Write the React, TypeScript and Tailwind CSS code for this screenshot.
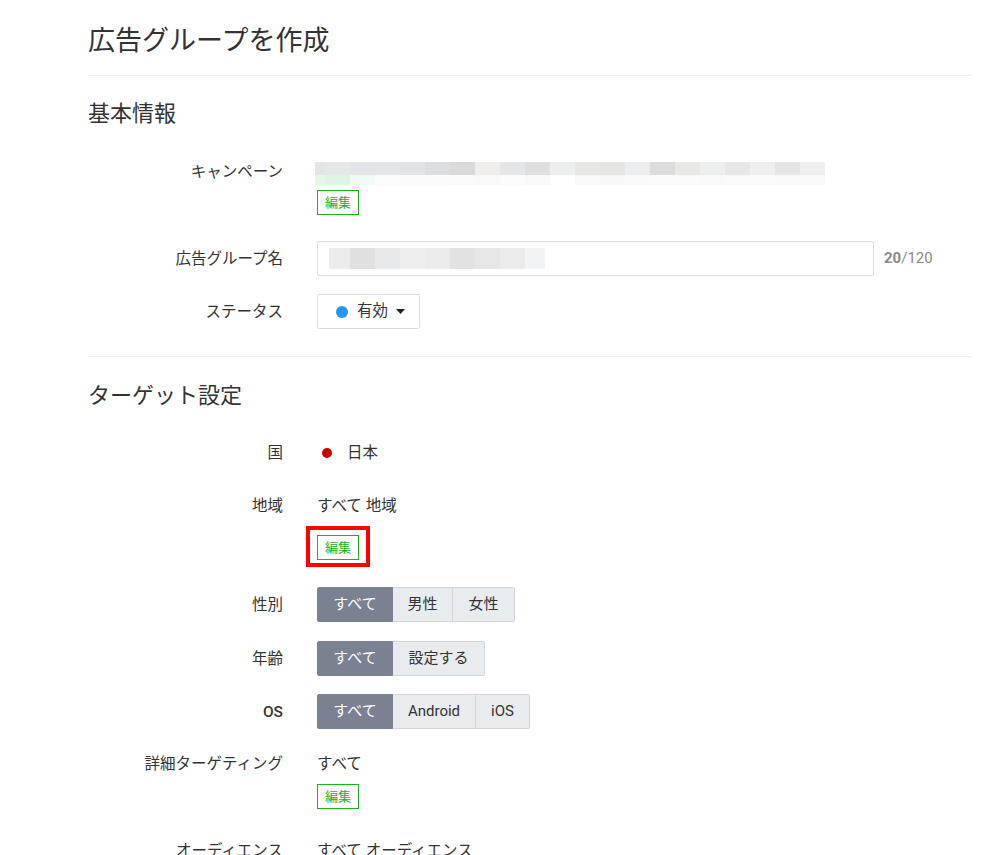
import React from 'react';

const FONT = "font-['Roboto','Noto_Sans_CJK_JP',sans-serif]";

// pixelated (blurred) placeholder blocks
const campaignTop = [
  '#e4e5e7', '#e6e7e9', '#e3e6e9', '#e5e6e8', '#e2e3e5', '#dcdddf', '#dadada', '#efeeec', '#e5e6e8', '#dfdfe0', '#eceeee',
  '#e7e7e5', '#e6e7e5', '#ecedef', '#dcdcdc', '#e8e8e6', '#edefee', '#e7e7e7', '#eeeeef', '#e5e5e5', '#efefef',
];
const campaignBottom = [
  '#e6f6e8', '#e0f3e2', '#f1faf3', '#fcfcfc', '#fbfbfb', '#fbfbfb', '#fafafa', '#f9f9f9', '#fbfdfc', '#f9f9f9', '#ffffff',
  '#f9f9f9', '#f8f8f8', '#f9f9f9', '#f9fbfa', '#fafafa', '#f9f9f9', '#fafafa', '#fafafa', '#f9f9f9', '#f9f9f9',
];
const nameBlocks = [
  { w: 21, c: '#ececec' },
  { w: 25, c: '#e0e0e1' },
  { w: 25, c: '#e8e9ea' },
  { w: 25, c: '#eeeeee' },
  { w: 25, c: '#ebebeb' },
  { w: 25, c: '#e2e2e3' },
  { w: 25, c: '#e6e6e7' },
  { w: 25, c: '#ebebec' },
  { w: 20, c: '#f2f3f4' },
];

const Row: React.FC<{ label: string; className?: string; center?: boolean; children: React.ReactNode }> = ({
  label,
  className = '',
  center,
  children,
}) => (
  <div className={`flex ${center ? 'items-center' : 'items-start'} ${className}`}>
    <div className="w-[195px] shrink-0 text-right text-[15.5px] leading-[22px] text-[#333]">{label}</div>
    <div className="ml-[34px] flex-1">{children}</div>
  </div>
);

const EditButton: React.FC<{ className?: string }> = ({ className = '' }) => (
  <button className={`flex h-[25px] w-[42px] items-center justify-center border border-[#1db21d] bg-white text-[13px] text-[#1db21d] ${className}`}>
    編集
  </button>
);

const Segmented: React.FC<{ items: { label: string; w: number }[] }> = ({ items }) => (
  <div className="flex h-[35px]">
    {items.map((it, i) => (
      <div
        key={it.label}
        style={{ width: it.w }}
        className={`flex items-center justify-center border text-[15px] ${
          i === 0
            ? 'rounded-l-[2px] border-[#7a8292] bg-[#7a8292] text-white'
            : 'border-l-0 border-[#d3d7dc] bg-[#e9ecef] text-[#333]'
        } ${i === items.length - 1 ? 'rounded-r-[2px]' : ''}`}
      >
        {it.label}
      </div>
    ))}
  </div>
);

export default function App() {
  return (
    <div className={`min-h-screen bg-white pl-[88px] pr-[20px] pt-[23px] text-[#333] ${FONT}`}>
      <h1 className="text-[27px] leading-[36px] text-[#333]">広告グループを作成</h1>
      <hr className="mt-[16px] border-t border-[#eeeeee]" />

      <h2 className="mt-[23px] text-[22px] leading-[30px]">基本情報</h2>

      <Row label="キャンペーン" className="mt-[32px]">
        <div className="ml-[-2px] mt-[1px] flex flex-col">
          <div className="flex h-[13px]">
            {campaignTop.map((c, i) => (
              <div key={i} style={{ backgroundColor: c, width: i === 0 ? 10 : 25 }} />
            ))}
          </div>
          <div className="flex h-[10px]">
            {campaignBottom.map((c, i) => (
              <div key={i} style={{ backgroundColor: c, width: i === 0 ? 10 : 25 }} />
            ))}
          </div>
        </div>
        <EditButton className="mt-[5px]" />
      </Row>

      <Row label="広告グループ名" center className="mt-[26px]">
        <div className="flex items-center">
          <div className="flex h-[35px] w-[557px] items-center rounded-[2px] border border-[#dddddd] px-[11px]">
            <div className="flex h-[21px]">
              {nameBlocks.map((b, i) => (
                <div key={i} style={{ backgroundColor: b.c, width: b.w }} />
              ))}
            </div>
          </div>
          <span className="ml-[10px] text-[15px] text-[#888]">
            <b className="font-bold">20</b>/120
          </span>
        </div>
      </Row>

      <Row label="ステータス" center className="mt-[18px]">
        <button className="flex h-[35px] w-[103px] items-center rounded-[2px] border border-[#dddddd] bg-white pl-[18px] text-[15.5px] text-[#333]">
          <span className="h-[12px] w-[12px] rounded-full bg-[#2196f3]" />
          <span className="ml-[9px]">有効</span>
          <svg className="ml-[8px]" width="9" height="5" viewBox="0 0 9 5">
            <path d="M0 0h9L4.5 5z" fill="#222" />
          </svg>
        </button>
      </Row>

      <hr className="mt-[27px] border-t border-[#eeeeee]" />

      <h2 className="mt-[24px] text-[22px] leading-[30px]">ターゲット設定</h2>

      <Row label="国" className="mt-[31px]">
        <div className="flex items-center text-[15.5px] leading-[22px]">
          <span className="ml-[5px] h-[10px] w-[10px] rounded-full bg-[#cc0000]" />
          <span className="ml-[15px]">日本</span>
        </div>
      </Row>

      <Row label="地域" className="mt-[31px]">
        <div className="text-[15.5px] leading-[22px]">すべて 地域</div>
        <div className="relative mt-[18px] w-[42px]">
          <EditButton />
          <div className="pointer-events-none absolute left-[-11px] top-[-9px] h-[41px] w-[64px] border-[4px] border-[#ff0000]" />
        </div>
      </Row>

      <Row label="性別" center className="mt-[27px]">
        <Segmented
          items={[
            { label: 'すべて', w: 76 },
            { label: '男性', w: 60 },
            { label: '女性', w: 62 },
          ]}
        />
      </Row>

      <Row label="年齢" center className="mt-[19px]">
        <Segmented
          items={[
            { label: 'すべて', w: 76 },
            { label: '設定する', w: 92 },
          ]}
        />
      </Row>

      <Row label="OS" center className="mt-[18px] [&>div:first-child]:font-medium">
        <Segmented
          items={[
            { label: 'すべて', w: 76 },
            { label: 'Android', w: 83 },
            { label: 'iOS', w: 54 },
          ]}
        />
      </Row>

      <Row label="詳細ターゲティング" className="mt-[24px]">
        <div className="text-[15.5px] leading-[22px]">すべて</div>
        <EditButton className="mt-[9px]" />
      </Row>

      <Row label="オーディエンス" className="mt-[31px]">
        <div className="text-[15.5px] leading-[22px]">すべて オーディエンス</div>
      </Row>
    </div>
  );
}
